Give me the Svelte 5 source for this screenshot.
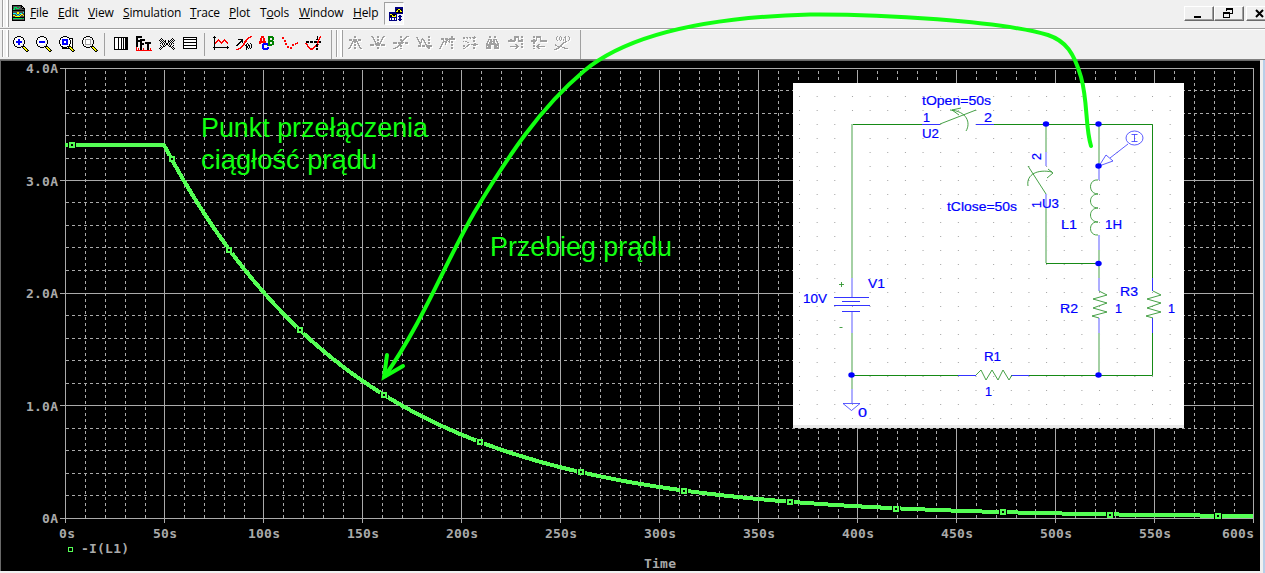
<!--
  Waveform viewer window: menu bar, icon toolbar and a transient plot
  with the simulated circuit laid over it.
-->
<script lang="ts">
	const menus = ['File', 'Edit', 'View', 'Simulation', 'Trace', 'Plot', 'Tools', 'Window', 'Help'];
	const accel: Record<string, number> = { Tools: 1 };

	const palette: Record<string, string> = {
		k: '#000000',
		w: '#ffffff',
		b: '#0000ff',
		n: '#000080',
		r: '#ff0000',
		g: '#008000',
		y: '#ffff00',
		o: '#808000',
		c: '#00ffff',
		l: '#00e060',
		x: '#a0a0a0',
		d: '#505050'
	};

	// one character per pixel, a dot is transparent
	function layers(art: string) {
		const out: Record<string, string> = {};
		art.trim().split(/\s+/).forEach((row, y) => {
			[...row].forEach((ch, x) => {
				if (ch !== '.') out[ch] = (out[ch] ?? '') + `M${x} ${y}h1v1h-1z`;
			});
		});
		return Object.entries(out);
	}

	const lens = (a: string[]) => `
		....kkkk........
		..kk....kk......
		.k${a[0]}.k.....
		.k${a[1]}.k.....
		k.${a[2]}..k....
		k.${a[3]}..k....
		k.${a[4]}..k....
		k.${a[5]}..k....
		.k${a[6]}.k.....
		.k........k.....
		..kk....kkkk....
		....kkkk.kyyk...
		..........kyyk..
		...........kyyk.
		............kyok
		.............kk.`;

	const zoomTools = [
		lens(['wwwwwww', 'wwwbbww', 'wwwbbww', 'wbbbbbb', 'wbbbbbb', 'wwwbbww', 'wwwbbww']),
		lens(['wwwwwww', 'wwwwwww', 'wwwwwww', 'wbbbbbb', 'wbbbbbb', 'wwwwwww', 'wwwwwww']),
		`....kkkk........
		..kk....kk......
		.kwwwwwwwwkkkk..
		.kwbbbbbbwkwwk..
		k.wbbbbbbwwkwk..
		k.wbbwwbbwwkwk..
		k.wbbwwbbwwkwk..
		k.wbbbbbbwwkwk..
		.kwbbbbbbwkwwk..
		.kwwwwwwwwkwwk..
		..kk....kkkkwk..
		...kkkkk.kyykk..
		...kkkkkkkkyyk..
		...........kyyk.
		............kyok
		.............kk.`,
		lens(['wwwwwww', 'wxxxxxx', 'wxwwwwx', 'wxwwwwx', 'wxwwwwx', 'wxwwwwx', 'wxxxxxx'])
	];

	const viewTools = [
		`................
		.kkkkkkkkkkkkkk.
		.kwwwkwwkwkwkkk.
		.kwwwkwwkwkwkkk.
		.kwwwkwwkwkwkkk.
		.kwwwkwwkwkwkkk.
		.kwwwkwwkwkwkkk.
		.kwwwkwwkwkwkkk.
		.kwwwkwwkwkwkkk.
		.kwwwkwwkwkwkkk.
		.kwwwkwwkwkwkkk.
		.kwwwkwwkwkwkkk.
		.kwwwkwwkwkwkkk.
		.kkkkkkkkkkkkkk.`,
		`kkkkkk..........
		kkkkkk..........
		kk..............
		kk..kkkkk.......
		kkkkkkkkk.......
		kkkkkk..........
		kk..kk...kkkkkk.
		kk..kkkk.kkkkkk.
		kk..kkkk...kk...
		kk..kk.....kk...
		kk..kk.....kk...
		r...kk.....kk...
		r.r.kk.r...kk.r.
		r.r.kk.r...kk.r.
		rrrrrrrrrrrrrrrr`,
		`................
		................
		..k..........k..
		.k.k........k.k.
		k.k.k.k..k.k.k.k
		.k.k.kk..kk.k.k.
		..k.k.k..k.k.k..
		.k.k.k.kk.k.k.k.
		...k.k.kk.k.k...
		.k..k.k..k.k..k.
		..k.kk....kk.k..
		.k.k........k.k.
		k.k..........k.k
		.k............k.`,
		`................
		.kkkkkkkkkkkkkk.
		.kwwwwwwwwwwwwk.
		.kkkkkkkkkkkkkk.
		.kwwwwwwwwwwwwk.
		.kwwwwwwwwwwwwk.
		.kkkkkkkkkkkkkk.
		.kwwwwwwwwwwwwk.
		.kwwwwwwwwwwwwk.
		.kkkkkkkkkkkkkk.
		.kwwwwwwwwwwwwk.
		.kwwwwwwwwwwwwk.
		.kkkkkkkkkkkkkk.`
	];

	const traceTools = [
		`.k..............
		kkk.............
		.k..............
		.k...r.....r....
		.k..rrr...rrr...
		.k.rr.rr.rr.rr..
		.krr...rrr...rr.
		.kr.....r.....r.
		.k..............
		.k..............
		.k............k.
		kkkkkkkkkkkkkkkk
		.k............k.
		.k..............`,
		`..............rr
		............rrr.
		...........rr...
		..kkkkk...rr....
		.....kk..rr.....
		....kkk.rrr.....
		...kk.k.rr......
		..kk...rr..k..k.
		.kk....rr.k.k..k
		kk....rr.kk.kk.k
		.....rr...kk.k.k
		....rr....kk.k.k
		..rrr.....k.k.k.
		rrr.......k.....`,
		`..rrr....ggggg..
		..rrr....gggggg.
		.rr.rr...gg..gg.
		.rr.rr...gg..gg.
		.rr.rr...ggggg..
		rrrrrrr..gggggg.
		rrrrrrr..gg..gg.
		rr..bbbbbgg..gg.
		...bbbbbbgggggg.
		...bb...bgggg...
		...bb...........
		...bb...bb......
		...bbbbbbb......
		....bbbbb.......`,
		`................
		rr..............
		rr..............
		................
		..rr............
		..rr............
		...............r
		...rr........rrr
		...rr.....rr.r..
		..........rr....
		.....rr.........
		.....rr.rr......
		........rr......`,
		`............k..r
		............k.rr
		............k.r.
		...........kkrr.
		.............r..
		.kkk.kkk.kkkrrkk
		.kkk.kkk.kkkrrkk
		rr..........r...
		.rr........kkr..
		..r.......rkk...
		..rr.....rrkk...
		...rr...rr......
		....rrrrr..kk...
		.....rrr...kk...`
	];

	const cursorTools = [
		`.......xx.......
		.......xx.......
		................
		..xxx.xxxx.xxx..
		..xxx.xxxx.xxx..
		.....xxxxxx.....
		.....x.xx.x.....
		....xx....xx....
		....x..xx..x....
		...xx..xx..xx...
		...x........x...
		..xx...xx...xx..
		.xx....xx....xx.`,
		`.xx....xx....xx.
		..xx...xx...xx..
		...x........x...
		...xx..xx..xx...
		....x..xx..x....
		....xx....xx....
		.....x.xx.x.....
		.....xxxxxx.....
		xxxx.xxxxx.xxxx.
		xxxx..xxxx.xxxx.
		................
		.......xx.......
		.......xx.......`,
		`.......xx....xxx
		.......xx...xx..
		...........xx...
		.......xx.xx....
		.......xxxx.....
		........xx......
		xxxx.xxxxxx.xxx.
		xxxx.xxxxx..xxx.
		......xx........
		.....xxxx.......
		....xx.xx.......
		..xxx...........
		xxx....xx.......`,
		`............xx..
		xx..........xx..
		.x....x.........
		.xx..xxx....xx..
		..x..x.xx...xx..
		..xx.x..x.......
		...xxx..xx..xx..
		...xx....x..xx..
		....x....xx.....
		..xxx.xxx.xxxxxx
		..xxx.xxx.xxxxxx
		...........xxx..
		............xx..`,
		`............xx..
		............xx..
		..xxx.xxx.xxxxxx
		..xxx.xxxxxxxxxx
		....x..xx.x.....
		....xxxx.xx.xx..
		...xx.xx..x.xx..
		...x..x.........
		..xx..x.....xx..
		..x.........xx..
		.xx.............
		.x..........xx..
		xx..........xx..`,
		`............x...
		.xx.xx.xx.xxxx..
		.xx..x..x..xx...
		................
		...........xx...
		.x.xx......xx...
		.....xx.........
		............xx..
		......xx.xxxxxxx
		.xx..xx....xxx..
		.xx.xx..........
		...x.......xx...
		.xx........xx...`,
		`....xx...xx.....
		....xx...xx.....
		................
		...xxxx.xxxx....
		...x.xx.xx.x....
		..xx.xxxxx.xx...
		..x.xxx.xx..x...
		.xx.xxxxxxx.xx..
		.xxxxxxxxxxxxx..
		.xxxxx...xxxxx..
		.x.xxx...xxx.x..
		.xxxxx...xxxxx..
		.xxxxx...xxxxx..`,
		`......xxxxx..xx.
		......xxxxx..xx.
		......xx..x.....
		..xx..xx..x..xx.
		xxxxxxxx..xxxxx.
		xxxxxxx...xxxxx.
		................
		.............xx.
		.......xx....xx.
		........xx......
		..xxxxxxxxx..xx.
		........xx...xx.
		.......xx.......`,
		`..xx.xxxxx......
		..xx.xxxxx......
		.....x...x......
		..xx.x...x......
		xxxxxx...xxxxxxx
		xxxxx....xxxxxxx
		..xx............
		..xx............
		.......xx.......
		..xx..xx........
		..xx.xxxxxxxxx..
		......xx........
		..xx...xx.......`,
		`...x..x....x..x.
		..x..x.x..xx...x
		..x..x.x...x...x
		..x..x.x.x.x...x
		...x..x..x.x..x.
		...........xx...
		.........xxx....
		........xx......
		.x.....xx.......
		.xx...xx........
		...xxxxx........
		....xx..xxx.....
		..xxx.....xxxx..
		xxx.............`
	];

	const appIcon = `
		kkkkkkkkkk...
		kddddddddkk..
		kdlllddldkxk.
		kdldllldddkkk
		klldddddddddk
		kkkkkkkkkkkkk
		kdddddddddddk
		kddddyyddddck
		kcccdyydccddk
		kdddcddcdyydk
		kyyddccdyddyk
		kddyyyyyddddk
		kkkkkkkkkkkkk
		kllllllllldlk
		kdddddddddddk
		kkkkkkkkkkkkk`;

	const windowsIcon = `
		......nnnnnnnn
		......nnnnnnnn
		......nkkyykkn
		......nkykkykn
		......nyykkyyn
		nnnnnnnkkkkkkn
		nnnnnnnnnnnnnn
		nyykkkkn......
		nkkykkyn..nn..
		nkkyyyyn.nnnn.
		nnnnnnnn..nn..
		nwnwwnwn..nn..
		nwnwwnwn.nnnn.
		nnnnnnnn..nn..`;

	// plot area, in panel coordinates
	const plot = { left: 65, top: 8, right: 1253, bottom: 458 };
	const sx = (t: number) => plot.left + (t / 600) * (plot.right - plot.left);
	const sy = (a: number) => plot.bottom - (a / 4) * (plot.bottom - plot.top);

	const xTicks = Array.from({ length: 13 }, (_, i) => i * 50);
	const minorX = Array.from({ length: 60 }, (_, i) => i).filter((i) => i % 5);
	const minorY = Array.from({ length: 20 }, (_, i) => i).filter((i) => i % 5);
	const yLabels = ['0A', '1.0A', '2.0A', '3.0A', '4.0A'];

	const current = (t: number) => (t < 50 ? 3.31 : 3.31 * Math.exp(-(t - 50) / 100));
	const samples = [0, 50, ...Array.from({ length: 110 }, (_, i) => 55 + i * 5).filter((t) => t <= 600)];
	const curve = samples.map((t) => `${sx(t)},${sy(current(t)) - 0.5}`).join(' ');
	const markers = [
		[72, 85], [172, 99], [229, 190], [300, 270], [384, 335], [480, 382], [581, 412],
		[684, 431], [790, 442], [896, 449], [1003, 452], [1110, 455], [1218, 456]
	];

	const nodes = [[253, 41], [305.5, 41], [305.5, 83], [305.5, 180.5], [58.5, 292], [305.5, 292]];
	const parts: [string, number, number, number][] = [
		['tOpen=50s', 129, 22, 69],
		['1', 130, 39, 7],
		['U2', 129, 55, 17],
		['2', 191, 39, 8],
		['tClose=50s', 154, 128, 70],
		['U3', 249, 125, 17],
		['L1', 268, 146, 16],
		['1H', 312, 146, 17],
		['V1', 75, 205, 17],
		['10V', 10, 220, 24],
		['R2', 267, 230, 18],
		['1', 322, 230, 7],
		['R3', 327, 213, 18],
		['1', 375, 230, 7],
		['R1', 191, 278, 17],
		['1', 192, 313, 7],
		['0', 65, 334, 9]
	];
</script>

{#snippet icon(art: string, w = 16, h = 16)}
	<svg width={w} height={h} shape-rendering="crispEdges">
		{#each layers(art) as [ch, d]}
			<path {d} fill={palette[ch]} />
		{/each}
	</svg>
{/snippet}

{#snippet tools(list: string[], off = false)}
	{#each list as art}
		<button class:off disabled={off}>{@render icon(art)}</button>
	{/each}
{/snippet}

<div class="window">
	<header class="menubar">
		<span class="grip"></span>
		<span class="app">{@render icon(appIcon, 13)}</span>
		<nav>
			{#each menus as name}
				{@const i = accel[name] ?? 0}
				<span>{name.slice(0, i)}<u>{name[i]}</u>{name.slice(i + 1)}</span>
			{/each}
		</nav>
		<span class="pressed">{@render icon(windowsIcon, 14, 14)}</span>
		<div class="controls">
			<button><svg width="28" height="13"><path d="M9 9h7v2h-7z" /></svg></button>
			<button>
				<svg width="28" height="13" shape-rendering="crispEdges">
					<path d="M11.5 4V1.5h6v5H15M11 2.5h7M8.5 5.5h6v5h-6zM8 6.5h7" fill="none" stroke="#000" />
				</svg>
			</button>
			<button><svg width="28" height="13"><path d="M9 3l7 7M16 3l-7 7" stroke="#000" stroke-width="2" /></svg></button>
		</div>
	</header>

	<div class="toolbar">
		<span class="grip"></span>
		<div class="group first">
			{@render tools(zoomTools)}
			<i></i>
			{@render tools(viewTools)}
			<i></i>
			{@render tools(traceTools)}
		</div>
		<span class="grip second"></span>
		<div class="group last">
			{@render tools(cursorTools, true)}
		</div>
	</div>

	<main>
		<svg class="plot" width="1260" height="511">
			<g class="grid" shape-rendering="crispEdges">
				{#each minorX as i}
					<path class="minor" d="M{Math.round(sx(i * 10) + 0.3) + 0.5} 11V458" />
				{/each}
				{#each minorY as i}
					<path class="minor" d="M66 {Math.floor(sy(i * 0.2)) + 0.5}H1253" />
				{/each}
				{#each xTicks as t}
					<path d="M{sx(t) + 0.5} {t % 600 ? 10 : 8}V463" />
				{/each}
				{#each yLabels as _, a}
					<path d="M60 {Math.floor(sy(a)) + 0.5}H1254" />
				{/each}
			</g>

			<g class="labels">
				{#each yLabels as label, a}
					<text x={58 - label.length * 8} y={sy(a) + 5} textLength={label.length * 8}>{label}</text>
				{/each}
				{#each xTicks as t}
					{@const label = `${t}s`}
					{@const w = label.length * 8}
					<text x={t === 0 ? 59 : t === 600 ? 1222 : sx(t) - (label.length === 3 ? 11 : 15)} y="478" textLength={w}>{label}</text>
				{/each}
				<text x="81" y="493" textLength="48">-I(L1)</text>
				<text x="644" y="508" textLength="32">Time</text>
			</g>

			<polyline class="curve" points={curve} shape-rendering="crispEdges" />
			<g shape-rendering="crispEdges">
				{#each markers as [x, y]}
					<rect x={x - 4} y={y - 3} width="8" height="6" fill="#000" />
					<rect class="marker" x={x - 2} y={y - 2} width="4" height="4" />
				{/each}
				<rect x="68.5" y="487.5" width="4" height="4" fill="none" stroke="#5f5" />
			</g>

			<g class="notes">
				<text x="201" y="77" textLength="227" lengthAdjust="spacingAndGlyphs">Punkt przełączenia</text>
				<text x="201" y="109" textLength="176" lengthAdjust="spacingAndGlyphs">ciągłość prądu</text>
				<text x="490" y="196" textLength="182" lengthAdjust="spacingAndGlyphs">Przebieg prądu</text>
			</g>
		</svg>

		<svg class="circuit" width="391" height="345">
			<defs>
				<pattern id="dots" x="6" y="13" width="17.65" height="14" patternUnits="userSpaceOnUse">
					<rect width="1" height="1" fill="#a0a0a0" />
				</pattern>
			</defs>
			<rect width="391" height="345" fill="#fff" />
			<rect width="386" height="340" fill="url(#dots)" />
			<rect y="342" width="391" height="3" fill="#e8e8e8" />

			<path class="wire" d="M59 41.5H129M201 41.5H359.5V195M359.5 250V292.5H236M59 292.5H165M253 180.5H305" />
			<path class="wire soft" d="M59 41V195M59 250V306M253 41V69M253 124V180M306 41V83M306 167V195M306 250V292" />
			<path class="lead" d="M129 41.5h18M183 41.5h18M359.5 195v13M359.5 235v15M165 292.5h18M218 292.5h18M41 214.5h35M49 218.5h18M41 222.5h36M49 228.5h18" />
			<path class="lead soft" d="M59 195v19M59 229v21M59 306v14M253 69v14M253 111v13M306 83v14M306 152v15M306 195v13M306 235v15" />

			<path class="part" d="M147 41l36-14M173 48c5-8 1-20-16-21M168 25l-9 2 7 5" />
			<path class="part" d="M235 83l18 28M235 103c-2-12 10-17 24-14M255 86l5 4-6 5" />
			<path class="part" d="M305 97c-10-1-10 14 0 14c-10 0-10 14 0 14c-10 0-10 14 0 14c-10-1-10 14 0 13" />
			<path class="part" d="M306 208l8 4-14 4 14 4-14 5 14 4-15 4 7 2" />
			<path class="part" d="M360 208l8 4-14 4 14 4-14 5 14 4-15 4 7 2" />
			<path class="part" d="M183 292l5-5 5 10 6-10 6 10 5-10 6 10 3-5" />
			<path class="part" d="M46 201.5h5M48.5 199v5M46.5 244.5h3" />

			<path class="lead thin" d="M50 320.5h17l-8.5 7zM306 83l7-11 7 6zM317 75l18-14" />
			<ellipse class="lead thin" cx="341.5" cy="55" rx="8.5" ry="7" />
			<path class="lead thin" d="M338.5 51.5h6M341.5 51.5v7M338.5 58.5h6" />

			{#each nodes as [cx, cy]}
				<ellipse {cx} {cy} rx="3.2" ry="2.7" fill="#00f" />
			{/each}
			{#each parts as [text, x, y, w]}
				<text {x} {y} textLength={w} lengthAdjust="spacingAndGlyphs">{text}</text>
			{/each}
			<text transform="translate(248 77) rotate(-90)">2</text>
			<text transform="translate(248 125) rotate(-90)">1</text>
		</svg>
	</main>

	<svg class="arrow" width="1265" height="573">
		<path d="M1091 146C1085 126 1088 102 1081 77C1074 53 1066 41 1048 35C1000 21 880 14 810 14.500C716 17 632 31 584 71C540 108 508 156 474 213C444 265 424 320 385 376" />
		<path d="M387 355L384 377L403 366" />
	</svg>
</div>

<style>
	:global(body) {
		background: #f0f0f0;
		overflow: hidden;
	}
	.window {
		position: relative;
		width: 1265px;
		height: 573px;
		display: flex;
		flex-direction: column;
		overflow: hidden;
		font-family: 'Open Sans', 'Noto Sans', sans-serif;
	}
	button {
		padding: 0;
		border: 0;
		background: none;
	}
	svg {
		display: block;
		flex: none;
	}
	.menubar,
	.toolbar {
		display: flex;
		flex: none;
		box-sizing: border-box;
		background: #f0f0f0;
	}
	.menubar {
		height: 29px;
		border-bottom: 1px solid #a0a0a0;
	}
	.toolbar {
		height: 31px;
		border-top: 1px solid #fff;
		border-bottom: 1px solid #808080;
	}
	.grip {
		flex: none;
		box-sizing: border-box;
		width: 7px;
		height: 27px;
		margin-left: 2px;
		border: solid #a0a0a0;
		border-width: 0 1px;
		box-shadow: inset 1px 0 #fff, inset -2px 0 #fff;
	}
	.app {
		margin: 5px 5px 0 3px;
	}
	nav {
		display: grid;
		grid-template-columns: 28px 30px 35px 67px 39px 31px 39px 54px 31px;
		font-size: 12px;
		line-height: 26px;
		letter-spacing: -0.15px;
		color: #000;
	}
	u {
		text-underline-offset: 1px;
	}
	.pressed {
		width: 21px;
		height: 23px;
		margin-top: 2px;
		box-sizing: border-box;
		padding: 4px 0 0 4px;
		background: #f8f8f8;
		border: 1px solid #fff;
		border-top-color: #a0a0a0;
		border-left-color: #a0a0a0;
	}
	.controls {
		display: flex;
		margin: 6px 0 0 780px;
	}
	.controls button {
		flex: none;
		height: 15px;
		width: 30px;
		border: 1px solid #fff;
		border-right: 1px solid #696969;
		border-bottom: 1px solid #696969;
		box-shadow: inset -1px -1px #a0a0a0;
	}
	.controls button:last-child {
		margin-left: 2px;
	}
	.group {
		display: flex;
		align-items: flex-start;
	}
	.group button {
		width: 23px;
		padding: 6px 3px 0 4px;
	}
	.group i {
		width: 1px;
		height: 23px;
		margin: 3px 4px 0 3px;
		background: #a0a0a0;
	}
	.group.first {
		box-sizing: border-box;
		width: 323px;
		height: 29px;
		border-right: 1px solid #a0a0a0;
	}
	.group.last {
		box-sizing: border-box;
		width: 238px;
		height: 29px;
		border-right: 1px solid #a0a0a0;
	}
	.grip.second {
		margin-left: 4px;
		margin-right: 0;
	}
	.off svg {
		filter: drop-shadow(1px 1px 0 #fff);
	}
	main {
		position: relative;
		flex: 1;
		width: 1260px;
		background: #000;
		border-right: 3px solid #f0f0f0;
		border-bottom: 2px solid #f0f0f0;
		box-shadow: 2px 0 #b8cfe8, inset 1px 1px #696969;
	}
	.grid path {
		stroke: #aaa;
		fill: none;
	}
	.grid .minor {
		stroke-dasharray: 3 3;
	}
	.labels text {
		font: bold 13px 'DejaVu Sans Mono', monospace;
		fill: #aaa;
	}
	.curve {
		fill: none;
		stroke: #5f5;
		stroke-width: 4;
	}
	.marker {
		fill: #000;
		stroke: #5f5;
		stroke-width: 2;
	}
	.notes text {
		font: 27px 'Liberation Sans', Arial, sans-serif;
		fill: #1f1;
	}
	.circuit {
		position: absolute;
		left: 793px;
		top: 23px;
	}
	.circuit text {
		font: 12.5px 'Liberation Sans', Arial, sans-serif;
		fill: #00f;
		stroke: #00f;
		stroke-width: 0.2;
	}
	.circuit path,
	ellipse.lead {
		fill: none;
	}
	.wire {
		stroke: #168a16;
	}
	.lead {
		stroke: #3434ff;
	}
	.wire.soft {
		stroke: #a4d0a4;
		stroke-width: 2;
	}
	.lead.soft {
		stroke: #adadff;
		stroke-width: 2;
	}
	.part {
		stroke: #329632;
		stroke-width: 0.9;
	}
	.thin {
		stroke-width: 0.8;
	}
	.arrow {
		position: absolute;
		left: 0;
		top: 0;
		pointer-events: none;
	}
	.arrow path {
		fill: none;
		stroke: #1f1;
		stroke-width: 4;
		stroke-linecap: round;
	}
</style>
